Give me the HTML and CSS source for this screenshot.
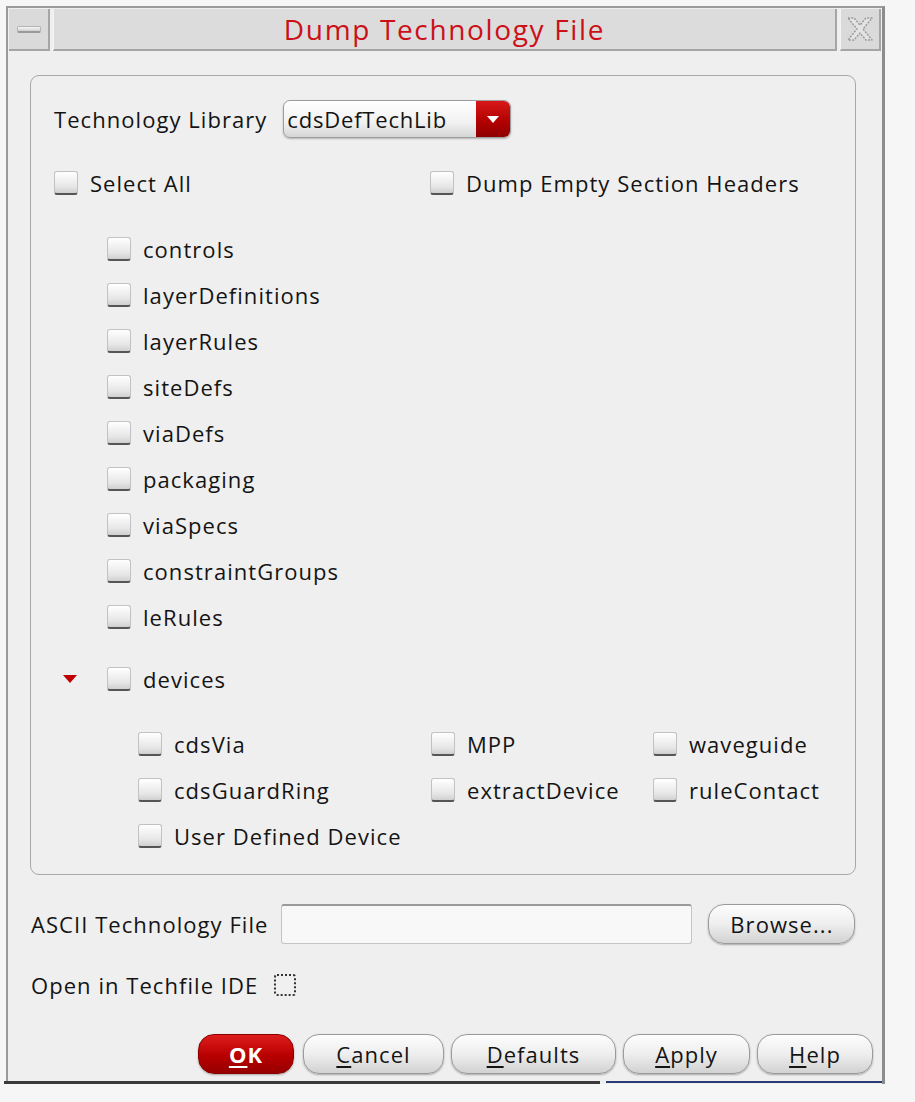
FILE: index.html
```html
<!DOCTYPE html>
<html>
<head>
<meta charset="utf-8">
<link rel="stylesheet" href="styles.css">
</head>
<body>
<div class="window">
  <div class="titlebar">
    <div class="tb-btn tb-min"><span class="min-bar"></span></div>
    <div class="tb-title">Dump Technology File</div>
    <div class="tb-btn tb-close">
      <svg width="32" height="30" viewBox="0 0 32 30"><path d="M4 4 L10 4 L16 11 L22 4 L28 4 L19 15 L28 26 L22 26 L16 19 L10 26 L4 26 L13 15 Z" fill="#e4e4e4" stroke="#9c9c9c" stroke-width="1.5" stroke-dasharray="2 1.2" stroke-linejoin="round"/></svg>
    </div>
  </div>
  <div class="content">
    <div class="group">
      <div class="row tech-row">
        <span class="label">Technology Library</span>
        <div class="combo"><span class="combo-text">cdsDefTechLib</span><span class="combo-arrow"></span></div>
      </div>
      <div class="row top-checks">
        <label class="check"><span class="box"></span><span>Select All</span></label>
        <label class="check dump"><span class="box"></span><span>Dump Empty Section Headers</span></label>
      </div>
      <div class="list">
        <label class="check"><span class="box"></span><span>controls</span></label>
        <label class="check"><span class="box"></span><span>layerDefinitions</span></label>
        <label class="check"><span class="box"></span><span>layerRules</span></label>
        <label class="check"><span class="box"></span><span>siteDefs</span></label>
        <label class="check"><span class="box"></span><span>viaDefs</span></label>
        <label class="check"><span class="box"></span><span>packaging</span></label>
        <label class="check"><span class="box"></span><span>viaSpecs</span></label>
        <label class="check"><span class="box"></span><span>constraintGroups</span></label>
        <label class="check"><span class="box"></span><span>leRules</span></label>
      </div>
      <div class="devices-row">
        <span class="tri"></span>
        <label class="check"><span class="box"></span><span>devices</span></label>
      </div>
      <div class="sub-grid">
        <label class="check"><span class="box"></span><span>cdsVia</span></label>
        <label class="check"><span class="box"></span><span>MPP</span></label>
        <label class="check"><span class="box"></span><span>waveguide</span></label>
        <label class="check"><span class="box"></span><span>cdsGuardRing</span></label>
        <label class="check"><span class="box"></span><span>extractDevice</span></label>
        <label class="check"><span class="box"></span><span>ruleContact</span></label>
        <label class="check"><span class="box"></span><span>User Defined Device</span></label>
      </div>
    </div>
    <div class="file-row">
      <span class="label">ASCII Technology File</span>
      <div class="input"></div>
      <div class="btn browse">Browse...</div>
    </div>
    <div class="ide-row">
      <span class="label">Open in Techfile IDE</span>
      <span class="ide-box"></span>
    </div>
    <div class="buttons">
      <div class="btn ok"><u>O</u>K</div>
      <div class="btn cancel"><u>C</u>ancel</div>
      <div class="btn defaults"><u>D</u>efaults</div>
      <div class="btn apply"><u>A</u>pply</div>
      <div class="btn help"><u>H</u>elp</div>
    </div>
  </div>
  <div class="bottom-edge"><span class="edge-dark"></span><span class="edge-blue"></span></div>
</div>
</body>
</html>
```
FILE: styles.css
```css
* { box-sizing: border-box; }
body {
  margin: 0;
  background: #f6f6f6;
  font-family: "Open Sans", "DejaVu Sans", sans-serif;
  color: #141414;
  font-size: 22px;
  letter-spacing: 1.05px;
}
.window {
  margin: 6px 0 0 6px;
  width: 879px;
  border-top: 2px solid #9a9a9a;
  border-left: 2px solid #9a9a9a;
  border-right: 3px solid #8c8c8c;
  background: #efefef;
  display: flex;
  flex-direction: column;
}
.titlebar {
  display: flex;
  height: 43px;
  padding: 1px 1px 0 1px;
  gap: 3px;
}
.tb-btn {
  width: 41px;
  background: #dadada;
  border-right: 2px solid #a5a5a5;
  border-bottom: 2px solid #a5a5a5;
  display: flex;
  align-items: center;
  justify-content: center;
}
.min-bar {
  width: 24px;
  height: 7px;
  background: linear-gradient(#f8f8f8, #cfcfcf);
  border: 1px solid #b4b4b4;
  border-bottom: 2px solid #999;
  border-radius: 2px;
}
.tb-title {
  flex: 1;
  background: #dcdcdc;
  border-left: 1px solid #f4f4f4;
  border-right: 2px solid #a5a5a5;
  border-bottom: 2px solid #a5a5a5;
  color: #cc1018;
  font-size: 28px;
  letter-spacing: 1.65px;
  text-align: center;
  line-height: 40px;
}
.tb-close { border-left: 1px solid #f4f4f4; }
.content {
  padding: 24px 0 0 22px;
  display: flex;
  flex-direction: column;
}
.group {
  width: 826px;
  border: 1.5px solid #a8a8a8;
  border-radius: 9px;
  padding: 24px 0 26px 23px;
  display: flex;
  flex-direction: column;
}
.row { display: flex; align-items: center; }
.label { white-space: nowrap; }
.tech-row { gap: 16px; }
.combo {
  width: 228px;
  height: 38px;
  border: 1px solid #9d9d9d;
  border-radius: 7px;
  background: linear-gradient(#ffffff, #f1f1f1 60%, #d6d6d6);
  display: flex;
  overflow: hidden;
  box-shadow: 0 1px 2px rgba(0,0,0,0.25);
}
.combo-text { flex: 1; padding-left: 3px; line-height: 36px; letter-spacing: 0.8px; }
.combo-arrow {
  width: 34px;
  background: linear-gradient(#d81818, #b00000 60%, #8e0000);
  position: relative;
}
.combo-arrow::after {
  content: "";
  position: absolute;
  left: 11px; top: 15px;
  border-left: 6px solid transparent;
  border-right: 6px solid transparent;
  border-top: 7px solid #fff;
}
.check {
  display: flex;
  align-items: center;
  gap: 12px;
  height: 24px;
  white-space: nowrap;
}
.box {
  width: 24px;
  height: 24px;
  flex: none;
  border: 1px solid #c2c2c2;
  border-bottom: 2px solid #555;
  border-radius: 3px;
  background: linear-gradient(#ffffff, #e6e6e6 70%, #d0d0d0);
}
.top-checks { margin-top: 33px; }
.top-checks .check { width: 376px; }
.list {
  margin-top: 42px;
  padding-left: 53px;
  display: flex;
  flex-direction: column;
  gap: 22px;
}
.devices-row {
  margin-top: 38px;
  display: flex;
  align-items: center;
  padding-left: 9px;
}
.tri {
  width: 0; height: 0;
  border-left: 7px solid transparent;
  border-right: 7px solid transparent;
  border-top: 8px solid #c00000;
  margin-right: 30px;
}
.sub-grid {
  margin-top: 41px;
  padding-left: 84px;
  display: grid;
  grid-template-columns: 293px 222px auto;
  row-gap: 22px;
}
.file-row {
  margin-top: 29px;
  display: flex;
  align-items: center;
  margin-left: 1px;
}
.input {
  margin-left: 13px;
  width: 411px;
  height: 40px;
  background: #f8f8f8;
  border: 1px solid #c4c4c4;
  border-top: 2px solid #9a9a9a;
  border-radius: 3px;
}
.btn {
  height: 40px;
  border: 1px solid #9a9a9a;
  border-radius: 16px;
  background: linear-gradient(#fdfdfd, #eeeeee 50%, #d2d2d2);
  box-shadow: 0 1px 2px rgba(0,0,0,0.3);
  display: flex;
  align-items: center;
  justify-content: center;
  white-space: nowrap;
}
.btn u { text-decoration-thickness: 2px; text-underline-offset: 3px; }
.browse { margin-left: 16px; width: 147px; }
.ide-row {
  margin-top: 29px;
  display: flex;
  align-items: center;
  margin-left: 1px;
  height: 24px;
}
.ide-box {
  margin-left: 16px;
  width: 22px;
  height: 22px;
  border: 2px dotted #333;
  border-radius: 3px;
  background: #f0f0f0;
}
.buttons {
  margin-top: 37px;
  display: flex;
  gap: 7px;
  padding-left: 168px;
  height: 40px;
}
.ok {
  width: 96px;
  background: linear-gradient(#dd1c1c, #b80000 55%, #950000);
  border-color: #8a0000;
  color: #fff;
  font-weight: bold;
}
.cancel { width: 141px; margin-left: 2px; }
.defaults { width: 165px; }
.apply { width: 127px; }
.help { width: 116px; }
.bottom-edge {
  margin-top: 7px;
  display: flex;
  height: 3px;
  margin-left: -4px;
}
.edge-dark { width: 596px; background: #3a3a3a; }
.edge-blue { margin-left: 6px; flex: 1; background: #2a3c78; height: 2px; }
```
